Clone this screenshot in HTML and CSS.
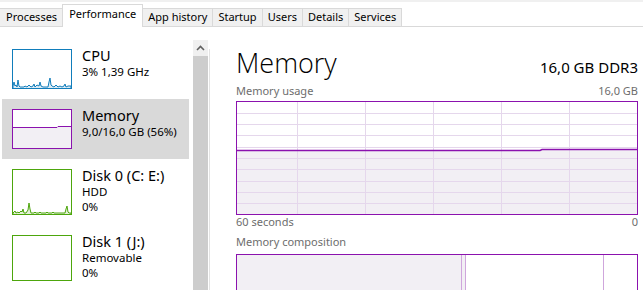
FILE: index.html
```html
<!DOCTYPE html>
<html lang="en">
<head>
    <meta charset="UTF-8">
    <meta name="viewport" content="width=device-width, initial-scale=1.0">
    <title>Task Manager - Performance</title>
    <link rel="stylesheet" href="styles.css">
</head>
<body>
    <div class="tabbar">
        <div class="tab">Processes</div>
        <div class="tab active">Performance</div>
        <div class="tab">App history</div>
        <div class="tab">Startup</div>
        <div class="tab">Users</div>
        <div class="tab">Details</div>
        <div class="tab">Services</div>
    </div>
    <div class="main">
        <div class="sidebar">
            <div class="list">
                <div class="item">
                    <svg class="thumb cpu" width="60" height="40" viewBox="0 0 60 40">
                        <polyline points="1,39 1,37 2,33 3,37 4,36 5,38 6,31 7,37 8,38 12,38 13,37 15,38 17,36 19,38 21,37 22,35 23,38 25,36 27,37 28,33 29,37 31,38 36,38 37,33 38,29 39,36 40,37 42,38 44,36 46,38 48,37 50,38 52,37 53,35 54,38 56,37 59,37 59,39" fill="#dcebf5" stroke="#117dbb" stroke-width="1"/>
                        <rect x="0.5" y="0.5" width="59" height="39" fill="none" stroke="#117dbb"/>
                    </svg>
                    <div class="info">
                        <div class="name">CPU</div>
                        <div class="sub">3% 1,39 GHz</div>
                    </div>
                </div>
                <div class="item selected">
                    <svg class="thumb" width="60" height="40" viewBox="0 0 60 40">
                        <rect x="0" y="0" width="60" height="40" fill="#fff"/>
                        <polygon points="1,18.5 45,18.5 46,17.5 59,17.5 59,39 1,39" fill="#f2eff4"/>
                        <polyline points="1,18.5 45,18.5 46,17.5 59,17.5" fill="none" stroke="#8b12ae" stroke-width="1"/>
                        <rect x="0.5" y="0.5" width="59" height="39" fill="none" stroke="#8b12ae"/>
                    </svg>
                    <div class="info">
                        <div class="name">Memory</div>
                        <div class="sub">9,0/16,0 GB (56%)</div>
                    </div>
                </div>
                <div class="item">
                    <svg class="thumb" width="60" height="46" viewBox="0 0 60 46">
                        <polyline points="1,45 1,44 3,42 4,44 6,43 7,44 9,42 10,43 11,40 12,44 14,44 16,41 17,34 18,40 19,44 22,44 23,43 24,44 27,44 28,43 29,44 34,44 35,43 36,44 40,44 41,43 42,44 53,44 54,40 55,37 56,43 57,44 59,44 59,45" fill="#e3f0d8" stroke="#4da60c" stroke-width="1"/>
                        <rect x="0.5" y="0.5" width="59" height="45" fill="none" stroke="#4da60c"/>
                    </svg>
                    <div class="info">
                        <div class="name">Disk 0 (C: E:)</div>
                        <div class="sub">HDD</div>
                        <div class="sub">0%</div>
                    </div>
                </div>
                <div class="item">
                    <svg class="thumb" width="60" height="46" viewBox="0 0 60 46">
                        <rect x="0.5" y="0.5" width="59" height="45" fill="none" stroke="#4da60c"/>
                    </svg>
                    <div class="info">
                        <div class="name">Disk 1 (J:)</div>
                        <div class="sub">Removable</div>
                        <div class="sub">0%</div>
                    </div>
                </div>
            </div>
            <div class="scrollbar">
                <div class="scroll-btn">
                    <svg width="15" height="16" viewBox="0 0 15 16">
                        <polyline points="4,10 7.5,6.5 11,10" fill="none" stroke="#606060" stroke-width="1.6"/>
                    </svg>
                </div>
                <div class="scroll-thumb"></div>
            </div>
            <div class="divider"></div>
        </div>
        <div class="detail">
            <div class="head">
                <div class="title">Memory</div>
                <div class="spec">16,0 GB DDR3</div>
            </div>
            <div class="label-row">
                <span>Memory usage</span>
                <span>16,0 GB</span>
            </div>
            <div class="graph">
                <svg width="400" height="112" viewBox="0 0 400 112">
                    <polygon points="0,48.5 303,48.5 305,47.5 400,47.5 400,112 0,112" fill="#f2eff4"/>
                    <g stroke="#e5d7ec" stroke-width="1">
                        <line x1="60.5" y1="0" x2="60.5" y2="112"/>
                        <line x1="128.5" y1="0" x2="128.5" y2="112"/>
                        <line x1="196.5" y1="0" x2="196.5" y2="112"/>
                        <line x1="264.5" y1="0" x2="264.5" y2="112"/>
                        <line x1="332.5" y1="0" x2="332.5" y2="112"/>
                        <line x1="0" y1="11.5" x2="400" y2="11.5"/>
                        <line x1="0" y1="22.5" x2="400" y2="22.5"/>
                        <line x1="0" y1="33.5" x2="400" y2="33.5"/>
                        <line x1="0" y1="45.5" x2="400" y2="45.5"/>
                        <line x1="0" y1="56.5" x2="400" y2="56.5"/>
                        <line x1="0" y1="67.5" x2="400" y2="67.5"/>
                        <line x1="0" y1="79.5" x2="400" y2="79.5"/>
                        <line x1="0" y1="90.5" x2="400" y2="90.5"/>
                        <line x1="0" y1="101.5" x2="400" y2="101.5"/>
                    </g>
                    <polyline points="0,48.5 303,48.5 305,47.5 400,47.5" fill="none" stroke="#8b12ae" stroke-width="1.5"/>
                </svg>
            </div>
            <div class="label-row">
                <span>60 seconds</span>
                <span>0</span>
            </div>
            <div class="label-row composition-label">
                <span>Memory composition</span>
            </div>
            <div class="composition">
                <div class="seg in-use"></div>
                <div class="seg modified"></div>
                <div class="seg standby"></div>
                <div class="seg free"></div>
            </div>
        </div>
    </div>
</body>
</html>
```

FILE: styles.css
```css
body {
    font-family: "Noto Sans", "Open Sans", sans-serif;
    margin: 0;
    padding: 0;
    width: 643px;
    height: 290px;
    overflow: hidden;
    background: #fff;
    color: #000;
}
.tabbar {
    display: flex;
    align-items: flex-end;
    border-top: 2px solid #f0f0f0;
    border-bottom: 1px solid #d9d9d9;
    padding-top: 6px;
}
.tab {
    font-size: 11px;
    line-height: 15px;
    padding: 0 5px 2px;
    background: #f0f0f0;
    border: 1px solid #d9d9d9;
    border-bottom: none;
    margin-left: -1px;
    white-space: nowrap;
}
.tab:first-child {
    margin-left: 0;
    border-left: none;
    padding-left: 6px;
}
.tab.active {
    position: relative;
    background: #fff;
    padding: 1px 6px 6px;
    margin-top: -4px;
    margin-bottom: -1px;
}
.main {
    display: flex;
    height: 263px;
    overflow: hidden;
}
.sidebar {
    display: flex;
    width: 210px;
    flex-shrink: 0;
}
.list {
    width: 187px;
    margin-left: 2px;
    padding-top: 12px;
}
.item {
    display: flex;
    align-items: flex-start;
    gap: 10px;
    padding: 10px 0 10px 10px;
}
.item.selected {
    background: #d9d9d9;
}
.thumb {
    display: block;
    flex-shrink: 0;
}
.info {
    margin-top: -3px;
}
.name {
    font-size: 14.5px;
    line-height: 18px;
}
.sub {
    font-size: 11.5px;
    line-height: 15px;
}
.scrollbar {
    width: 15px;
    margin: 13px 0 0 4px;
    display: flex;
    flex-direction: column;
}
.scroll-btn {
    height: 16px;
    background: #f0f0f0;
}
.scroll-btn svg {
    display: block;
}
.scroll-thumb {
    flex: 1;
    background: #cdcdcd;
}
.divider {
    width: 1px;
    margin: 22px 0 0 1px;
    background: #e3e3e3;
}
.detail {
    flex: 1;
    padding: 20px 5px 0 26px;
}
.head {
    display: flex;
    justify-content: space-between;
    align-items: baseline;
    height: 32px;
}
.title {
    font-family: "Open Sans", "Noto Sans", sans-serif;
    font-weight: 300;
    font-size: 27px;
    line-height: 32px;
}
.spec {
    font-size: 15px;
}
.label-row {
    display: flex;
    justify-content: space-between;
    font-size: 11px;
    line-height: 14px;
    color: #6d6d6d;
}
.head + .label-row {
    margin-top: 5px;
}
.graph {
    margin-top: 3px;
    border: 1px solid #8b12ae;
    height: 112px;
}
.graph svg {
    display: block;
}
.composition-label {
    margin-top: 6px;
}
.composition {
    display: flex;
    margin-top: 5px;
    height: 60px;
    border: 1px solid #8b12ae;
}
.seg {
    border-right: 1px solid #cfa6dc;
}
.in-use {
    width: 224px;
    background: #f2eff4;
}
.modified {
    width: 3px;
    background: #f2eff4;
}
.standby {
    width: 137px;
}
.free {
    flex: 1;
    border-right: none;
}
```
